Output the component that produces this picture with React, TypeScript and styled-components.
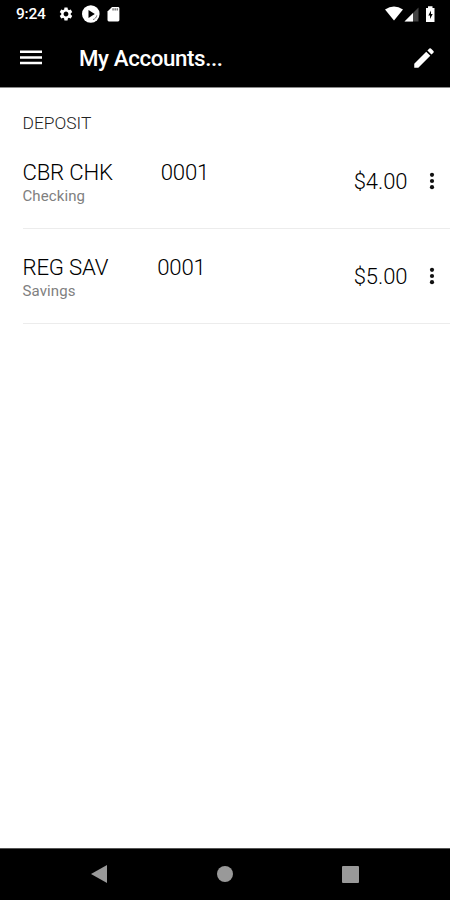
import React from "react";
import styled, { createGlobalStyle } from "styled-components";
import { MdEdit, MdSettings } from "react-icons/md";

const GlobalStyle = createGlobalStyle`
  * { box-sizing: border-box; }
  body { margin: 0; background: #fff; font-family: Roboto, "Liberation Sans", sans-serif; }
`;

const Screen = styled.div`
  display: flex;
  flex-direction: column;
  width: 450px;
  height: 900px;
  overflow: hidden;
  background: #fff;
`;

const StatusBar = styled.div`
  display: flex;
  align-items: center;
  height: 28px;
  padding: 0 13px 0 16px;
  background: #000;
  color: #fff;
`;

const Clock = styled.span`
  width: 42px;
  font-size: 15.5px;
  font-weight: 500;
  letter-spacing: -0.2px;
  line-height: 28px;
`;

const StatusIcons = styled.div<{ $end?: boolean }>`
  display: flex;
  align-items: center;
  gap: ${(p) => (p.$end ? "0" : "7.5px")};
  margin-left: ${(p) => (p.$end ? "auto" : "0")};
  svg { display: block; flex: none; }
`;

const Toolbar = styled.header`
  display: flex;
  align-items: center;
  height: 60px;
  padding: 0 13px 0 20px;
  background: #000;
  border-bottom: 1px solid #8a8a8a;
  color: #fff;
`;

const IconButton = styled.button`
  display: flex;
  padding: 0;
  border: 0;
  background: none;
  color: inherit;
`;

const Title = styled.h1`
  flex: 1;
  margin: 1px 0 0 37px;
  font-size: 22.3px;
  font-weight: 500;
  letter-spacing: -0.38px;
  line-height: 30px;
`;

const Content = styled.main`
  flex: 1;
  padding-left: 22.5px;
`;

const SectionTitle = styled.h2`
  height: 46px;
  margin: 0;
  padding-top: 24px;
  color: #222;
  font-size: 17.4px;
  font-weight: 300;
  line-height: 22px;
`;

const Row = styled.section`
  display: flex;
  align-items: center;
  height: 95px;
  padding: 0 11px 0 0;
  border-bottom: 1px solid #ececec;
`;

const Details = styled.div`
  flex: 1;
  padding-top: 2px;
`;

const NameLine = styled.div<{ $gap: number }>`
  display: flex;
  gap: ${(p) => p.$gap}px;
  color: #000;
  font-size: 22.2px;
  font-weight: 300;
  letter-spacing: -0.2px;
  line-height: 28px;
`;

const AccountType = styled.div`
  color: #808080;
  font-size: 15px;
  letter-spacing: 0.1px;
  line-height: 20px;
`;

const Amount = styled.div`
  padding-top: 2px;
  margin-right: 17.5px;
  color: #000;
  font-size: 22px;
  font-weight: 300;
  letter-spacing: -0.05px;
  line-height: 28px;
`;

const NavBar = styled.nav`
  display: flex;
  align-items: center;
  justify-content: space-between;
  height: 52px;
  padding: 0 91px 1px;
  border-top: 1px solid #555;
  background: #000;
  svg { display: block; }
`;

const MenuIcon = () => (
  <svg width="22" height="16" viewBox="0 0 22 16" fill="#fff">
    <path d="M0 .6h22v2.5H0zM0 6.2h22v2.5H0zM0 11.8h22v2.5H0z" />
  </svg>
);

const PlayIcon = () => (
  <svg width="18" height="18" viewBox="0 0 18 18">
    <circle cx="8.800" cy="9" r="8.8" fill="#fff" />
    <path d="M6.5 5v8l6.3-4z" fill="#000" />
    <path d="M11 14.6c2.2-.7 3.4-2.2 3.8-4.2" fill="none" stroke="#555" strokeWidth=".8" />
  </svg>
);

const CardIcon = () => (
  <svg width="13" height="16" viewBox="0 0 13 16">
    <path d="M5 1h6q1.4 0 1.4 1.4v11.600q0 1.4-1.4 1.4H1.9Q.5 15.400.5 14V5.500z" fill="#fff" />
    <path d="M5.400 2.300h1.300v2.300H5.400zM7.500 2.300h1.300v2.300H7.500zM9.600 2.300h1.300v2.300H9.600z" fill="#666" />
  </svg>
);

const SignalIcons = () => (
  <svg width="52" height="18" viewBox="0 0 52 18">
    <path d="M0 4.600Q9 -1.600 18 4.600L9 15.500z" fill="#fff" />
    <path d="M19.500 16.500L33.500 2.500v14z" fill="#444" />
    <path d="M19.500 16.500L28 8v8.500z" fill="#fff" />
    <path d="M41 3h2V1.300h4.500V3h2v14H41z" fill="#fff" />
    <path d="M46 5.500l-2.700 5h1.700v3.500l2.700-5H46z" fill="#000" />
  </svg>
);

const MoreIcon = () => (
  <svg width="14" height="20" viewBox="0 0 14 20" fill="#111">
    <circle cx="7" cy="3.800" r="2.100" />
    <circle cx="7" cy="10" r="2.100" />
    <circle cx="7" cy="16.200" r="2.100" />
  </svg>
);

const accounts = [
  { name: "CBR CHK", suffix: "0001", type: "Checking", amount: "$4.00", gap: 48 },
  { name: "REG SAV", suffix: "0001", type: "Savings", amount: "$5.00", gap: 49 },
];

export default function App() {
  return (
    <Screen>
      <GlobalStyle />
      <StatusBar>
        <Clock>9:24</Clock>
        <StatusIcons>
          <MdSettings size={16} />
          <PlayIcon />
          <CardIcon />
        </StatusIcons>
        <StatusIcons $end>
          <SignalIcons />
        </StatusIcons>
      </StatusBar>
      <Toolbar>
        <IconButton aria-label="Menu"><MenuIcon /></IconButton>
        <Title>My Accounts...</Title>
        <IconButton aria-label="Edit"><MdEdit size={26} /></IconButton>
      </Toolbar>
      <Content>
        <SectionTitle>DEPOSIT</SectionTitle>
        {accounts.map((a) => (
          <Row key={a.name}>
            <Details>
              <NameLine $gap={a.gap}>
                <span>{a.name}</span>
                <span>{a.suffix}</span>
              </NameLine>
              <AccountType>{a.type}</AccountType>
            </Details>
            <Amount>{a.amount}</Amount>
            <IconButton aria-label="More options"><MoreIcon /></IconButton>
          </Row>
        ))}
      </Content>
      <NavBar>
        <svg width="16" height="18" viewBox="0 0 16 18"><path d="M0 9L16 0v18z" fill="#999" /></svg>
        <svg width="16" height="16" viewBox="0 0 16 16"><circle cx="8" cy="8" r="8" fill="#999" /></svg>
        <svg width="17" height="17" viewBox="0 0 17 17"><rect width="17" height="17" rx="1" fill="#999" /></svg>
      </NavBar>
    </Screen>
  );
}
